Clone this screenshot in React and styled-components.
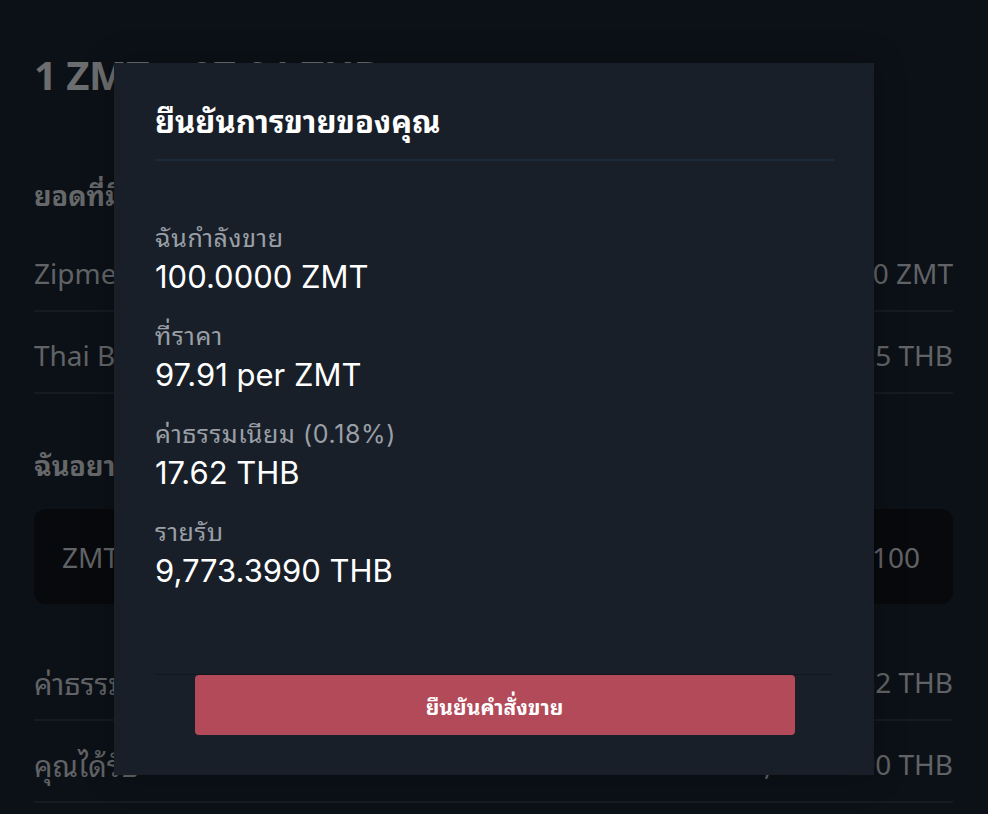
import React from 'react'
import styled, { createGlobalStyle } from 'styled-components'

const GlobalStyle = createGlobalStyle`
  html, body {
    margin: 0;
    padding: 0;
    background: #0c1117;
  }
  * {
    box-sizing: border-box;
  }
`

const FONT = `Inter, "Noto Sans Thai Looped", "Noto Sans Thai", Garuda, Loma, sans-serif`
const BG_FONT = `"Noto Sans", "Noto Sans Thai Looped", "Noto Sans Thai", Garuda, Loma, sans-serif`

const Page = styled.div`
  position: relative;
  height: 814px;
  overflow: hidden;
  padding: 40px 35px 0 34px;
  font-family: ${BG_FONT};
  color: #616366;
`

const Rate = styled.h1`
  margin: 0;
  font-size: 40px;
  line-height: 70px;
  font-weight: 700;
  color: #6c6d6f;
  letter-spacing: -0.5px;
`

const SectionTitle = styled.h2`
  margin: ${(p) => p.$top}px 0 0;
  font-size: 27px;
  line-height: 40px;
  font-weight: 700;
  color: #67686a;
`

const Rows = styled.div`
  margin-top: ${(p) => p.$top}px;
  display: flex;
  flex-direction: column;
`

const Row = styled.div`
  display: flex;
  justify-content: space-between;
  align-items: center;
  height: 82px;
  padding-top: 6px;
  border-bottom: 2px solid #161b21;
  font-size: 28px;
`

const RowLabel = styled.span`
  font-size: ${(p) => (p.$thai ? 29 : 28)}px;
`

const AmountBox = styled.div`
  margin-top: 23px;
  height: 95px;
  border-radius: 12px;
  background: #07090c;
  display: flex;
  justify-content: space-between;
  align-items: center;
  padding: 0 33px 0 28px;
  font-size: 28px;
`

const Backdrop = styled.div`
  position: absolute;
  inset: 0;
  display: flex;
  justify-content: center;
  align-items: flex-start;
  padding-top: 63px;
`

const Modal = styled.div`
  width: 760px;
  height: 712px;
  background: #181f29;
  display: flex;
  flex-direction: column;
  padding: 0 40px 40px 41px;
  font-family: ${FONT};
  box-shadow: 0 0 30px rgba(0, 0, 0, 0.25);
`

const ModalHeader = styled.div`
  padding-top: 38px;
  height: 98px;
  border-bottom: 2px solid #1d2a3a;
`

const ModalTitle = styled.h3`
  margin: 0;
  font-size: 31px;
  line-height: 42px;
  font-weight: 700;
  color: #ffffff;
`

const Details = styled.div`
  display: flex;
  flex-direction: column;
  gap: 20px;
  padding-top: 60px;
`

const Item = styled.div`
  display: flex;
  flex-direction: column;
`

const Label = styled.div`
  font-size: 25px;
  line-height: 34px;
  letter-spacing: 0.6px;
  color: #9a9fa6;
`

const Value = styled.div`
  font-size: 31px;
  line-height: 44px;
  color: #ffffff;
`

const Footer = styled.div`
  margin-top: auto;
  border-top: 1px solid #121820;
  display: flex;
  justify-content: center;
`

const ConfirmButton = styled.button`
  width: 600px;
  height: 60px;
  border: none;
  border-radius: 4px;
  background: #b24a59;
  color: #ffffff;
  font-family: ${FONT};
  font-size: 21px;
  font-weight: 700;
  cursor: pointer;
`

const details = [
  { label: 'ฉันกำลังขาย', value: '100.0000 ZMT' },
  { label: 'ที่ราคา', value: '97.91 per ZMT' },
  { label: 'ค่าธรรมเนียม (0.18%)', value: '17.62 THB' },
  { label: 'รายรับ', value: '9,773.3990 THB' },
]

export default function App() {
  return (
    <>
      <GlobalStyle />
      <Page>
        <Rate>1 ZMT = 97.91 THB</Rate>
        <SectionTitle $top={66}>ยอดที่มีอยู่</SectionTitle>
        <Rows $top={14}>
          <Row>
            <RowLabel>Zipmex Token</RowLabel>
            <span>100.0000 ZMT</span>
          </Row>
          <Row>
            <RowLabel>Thai Baht</RowLabel>
            <span>2,500.0025 THB</span>
          </Row>
        </Rows>
        <SectionTitle $top={52}>ฉันอยากขาย</SectionTitle>
        <AmountBox>
          <span>ZMT</span>
          <span>100</span>
        </AmountBox>
        <Rows $top={35}>
          <Row>
            <RowLabel $thai>ค่าธรรมเนียม</RowLabel>
            <span>17.62 THB</span>
          </Row>
          <Row>
            <RowLabel $thai>คุณได้รับ</RowLabel>
            <span>9,773.3990 THB</span>
          </Row>
        </Rows>

        <Backdrop>
          <Modal>
            <ModalHeader>
              <ModalTitle>ยืนยันการขายของคุณ</ModalTitle>
            </ModalHeader>
            <Details>
              {details.map((d) => (
                <Item key={d.label}>
                  <Label>{d.label}</Label>
                  <Value>{d.value}</Value>
                </Item>
              ))}
            </Details>
            <Footer>
              <ConfirmButton>ยืนยันคำสั่งขาย</ConfirmButton>
            </Footer>
          </Modal>
        </Backdrop>
      </Page>
    </>
  )
}
